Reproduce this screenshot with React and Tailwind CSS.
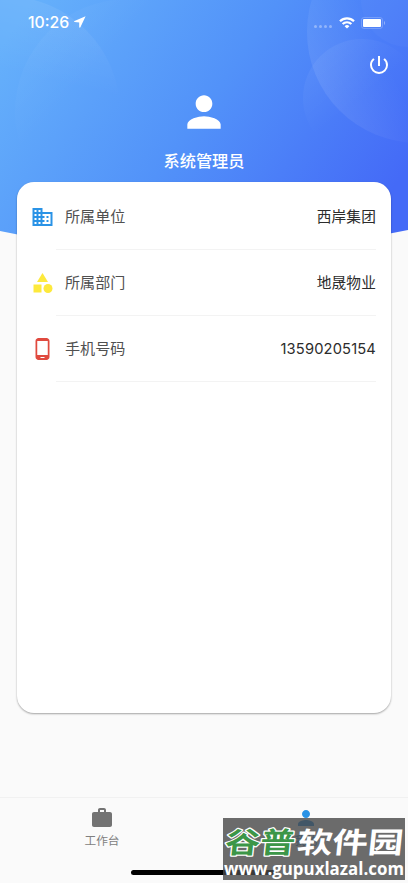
import React from 'react';
import {
    MdBusiness,
    MdCategory,
    MdPerson,
    MdPhoneAndroid,
    MdPowerSettingsNew,
    MdWork,
} from 'react-icons/md';

const rows = [
    { label: '所属单位', value: '西岸集团', icon: MdBusiness, color: 'text-[#2a93e6]' },
    { label: '所属部门', value: '地晟物业', icon: MdCategory, color: 'text-[#fde93c]' },
    { label: '手机号码', value: '13590205154', icon: MdPhoneAndroid, color: 'text-[#e04a3f]' },
];

const HeaderBackground = () => (
    <svg className="absolute inset-x-0 top-0 w-full h-[252px]" viewBox="0 0 408 252" preserveAspectRatio="none">
        <defs>
            <linearGradient id="sky" gradientUnits="userSpaceOnUse" x1="20" y1="20" x2="350" y2="250">
                <stop offset="0" stopColor="#65b0fb" />
                <stop offset="0.5" stopColor="#5292f9" />
                <stop offset="1" stopColor="#446af7" />
            </linearGradient>
            <linearGradient id="glowLeft" gradientUnits="userSpaceOnUse" x1="80" y1="0" x2="60" y2="84">
                <stop offset="0" stopColor="#fff" stopOpacity="0.08" />
                <stop offset="1" stopColor="#fff" stopOpacity="0" />
            </linearGradient>
            <linearGradient id="glowMid" gradientUnits="userSpaceOnUse" x1="50" y1="10" x2="105" y2="60">
                <stop offset="0" stopColor="#fff" stopOpacity="0.04" />
                <stop offset="1" stopColor="#fff" stopOpacity="0" />
            </linearGradient>
            <linearGradient id="glowBig" gradientUnits="userSpaceOnUse" x1="318" y1="75" x2="380" y2="45">
                <stop offset="0" stopColor="#fff" stopOpacity="0.08" />
                <stop offset="1" stopColor="#fff" stopOpacity="0" />
            </linearGradient>
            <linearGradient id="glowSmall" gradientUnits="userSpaceOnUse" x1="315" y1="65" x2="350" y2="108">
                <stop offset="0" stopColor="#fff" stopOpacity="0.05" />
                <stop offset="1" stopColor="#fff" stopOpacity="0" />
            </linearGradient>
            <clipPath id="curve">
                <path d="M0 0H408V230Q204 274 0 231Z" />
            </clipPath>
        </defs>
        <g clipPath="url(#curve)">
            <rect width="408" height="252" fill="url(#sky)" />
            <circle cx="4" cy="112" r="116" fill="url(#glowLeft)" />
            <circle cx="128" cy="112" r="113" fill="url(#glowMid)" />
            <circle cx="418" cy="32" r="111" fill="url(#glowBig)" />
            <circle cx="362" cy="98" r="59" fill="url(#glowSmall)" />
            <circle cx="408" cy="0" r="47" fill="#fff" fillOpacity="0.025" />
        </g>
    </svg>
);

const StatusBar = () => (
    <div className="h-[46px] flex items-center justify-between pl-7 pr-[23px] text-white">
        <div className="flex items-center gap-[5px]">
            <span className="font-['Inter'] font-medium text-[15.8px] leading-none">10:26</span>
            <svg width="12" height="12" viewBox="0 0 12 12" fill="currentColor" className="mb-px">
                <path d="M11.6 .3L.5 4.9c-.6.3-.5 1.2.3 1.2L5.2 6.600V11c0 .8 1 .9 1.200.3z" />
            </svg>
        </div>
        <div className="flex items-center mb-px">
            <div className="flex gap-[2px] mr-[7px] mt-[8px] opacity-35">
                {[0, 1, 2, 3].map((dot) => (
                    <span key={dot} className="w-[3px] h-[3px] rounded-full bg-white" />
                ))}
            </div>
            <svg width="16" height="12" viewBox="0 0 16 12" className="mr-[6px]">
                <g fill="none" stroke="#fff" strokeWidth="2.2">
                    <path d="M1 4.2A10 10 0 0 1 15 4.2" />
                    <path d="M3.6 7.1A6.2 6.2 0 0 1 12.4 7.1" />
                </g>
                <path d="M8 11.6L5.6 9.2A3.5 3.5 0 0 1 10.4 9.2Z" fill="#fff" />
            </svg>
            <svg width="24" height="12" viewBox="0 0 24 12">
                <rect x=".5" y=".5" width="21" height="11" rx="2.5" fill="none" stroke="#fff" strokeOpacity=".22" />
                <rect x="2" y="2" width="18" height="8" rx="1" fill="#fff" />
                <path d="M23 4v4q1-.5 1-2t-1-2" fill="#fff" fillOpacity=".4" />
            </svg>
        </div>
    </div>
);

const InfoRow = ({ label, value, icon: Icon, color }) => (
    <div className="h-[66px] flex pl-[13px] pr-[15px]">
        <div className="w-6 flex items-center shrink-0">
            <Icon size={24} className={`${color} translate-x-[0.5px]`} />
        </div>
        <div className="flex-1 flex items-center justify-between ml-[2px] pl-[9px] pt-[2px] border-b border-[#f3f3f3]">
            <span className="text-[15.1px] text-[#505050]">{label}</span>
            <span className="text-[14.7px] tracking-[0.15px] text-[#2c2c2c]">{value}</span>
        </div>
    </div>
);

const Watermark = () => (
    <div className="absolute left-[223px] top-[818px] w-[182px] h-[62px] bg-[#474747]/80">
        <svg className="block" width="182" height="62" viewBox="0 0 182 62">
            <g fontFamily="'Noto Sans CJK SC', sans-serif" fontWeight="700" fontSize="29" paintOrder="stroke" strokeLinejoin="round" transform="translate(4 0) skewX(-6)">
                <text x="1" y="35.5" textLength="70" lengthAdjust="spacingAndGlyphs" fill="#3c9648" stroke="#fff" strokeWidth="2.4">谷普</text>
                <text x="73" y="35.5" textLength="106" lengthAdjust="spacingAndGlyphs" fill="#fff">软件园</text>
            </g>
            <text x="1" y="56.5" textLength="180" lengthAdjust="spacingAndGlyphs" fontFamily="'Open Sans', sans-serif" fontWeight="700" fontSize="18.5" fill="#fff">www.gupuxlazal.com</text>
        </svg>
    </div>
);

const App = () => {
    return (
        <div className="relative w-full h-[883px] overflow-hidden bg-[#fafafa] font-['Inter','Noto_Sans_CJK_SC',sans-serif]">
            <HeaderBackground />
            <div className="relative flex flex-col h-full">
                <StatusBar />
                <div className="flex justify-end pr-[17px] pt-[7px] text-white">
                    <MdPowerSettingsNew size={24} />
                </div>
                <div className="flex flex-col items-center pt-[10px] text-white">
                    <MdPerson size={50} />
                    <span className="mt-[12px] mb-px text-[16.2px] leading-6 font-medium">系统管理员</span>
                </div>
                <div className="mx-[17px] mt-[8px] h-[531px] shrink-0 bg-white rounded-[17px] shadow-[0_1px_2px_rgba(0,0,0,0.35)] pt-[2px]">
                    {rows.map((row) => (
                        <InfoRow key={row.label} {...row} />
                    ))}
                </div>
                <div className="mt-auto h-[86px] border-t border-[#f1f1f1] flex relative">
                    <div className="flex-1 flex flex-col items-center pt-[8px] text-[#737373]">
                        <MdWork size={24} />
                        <span className="text-[11.7px] leading-4 mt-[3px] text-[#808080]">工作台</span>
                    </div>
                    <div className="flex-1 flex flex-col items-center pt-[8px] text-[#2a93e6]">
                        <MdPerson size={24} />
                        <span className="text-[11.7px] leading-4 mt-[3px]">我的</span>
                    </div>
                    <div className="absolute left-[131px] bottom-[8px] w-[146px] h-[5px] rounded-full bg-black" />
                </div>
            </div>
            <Watermark />
        </div>
    );
};

export default App;
